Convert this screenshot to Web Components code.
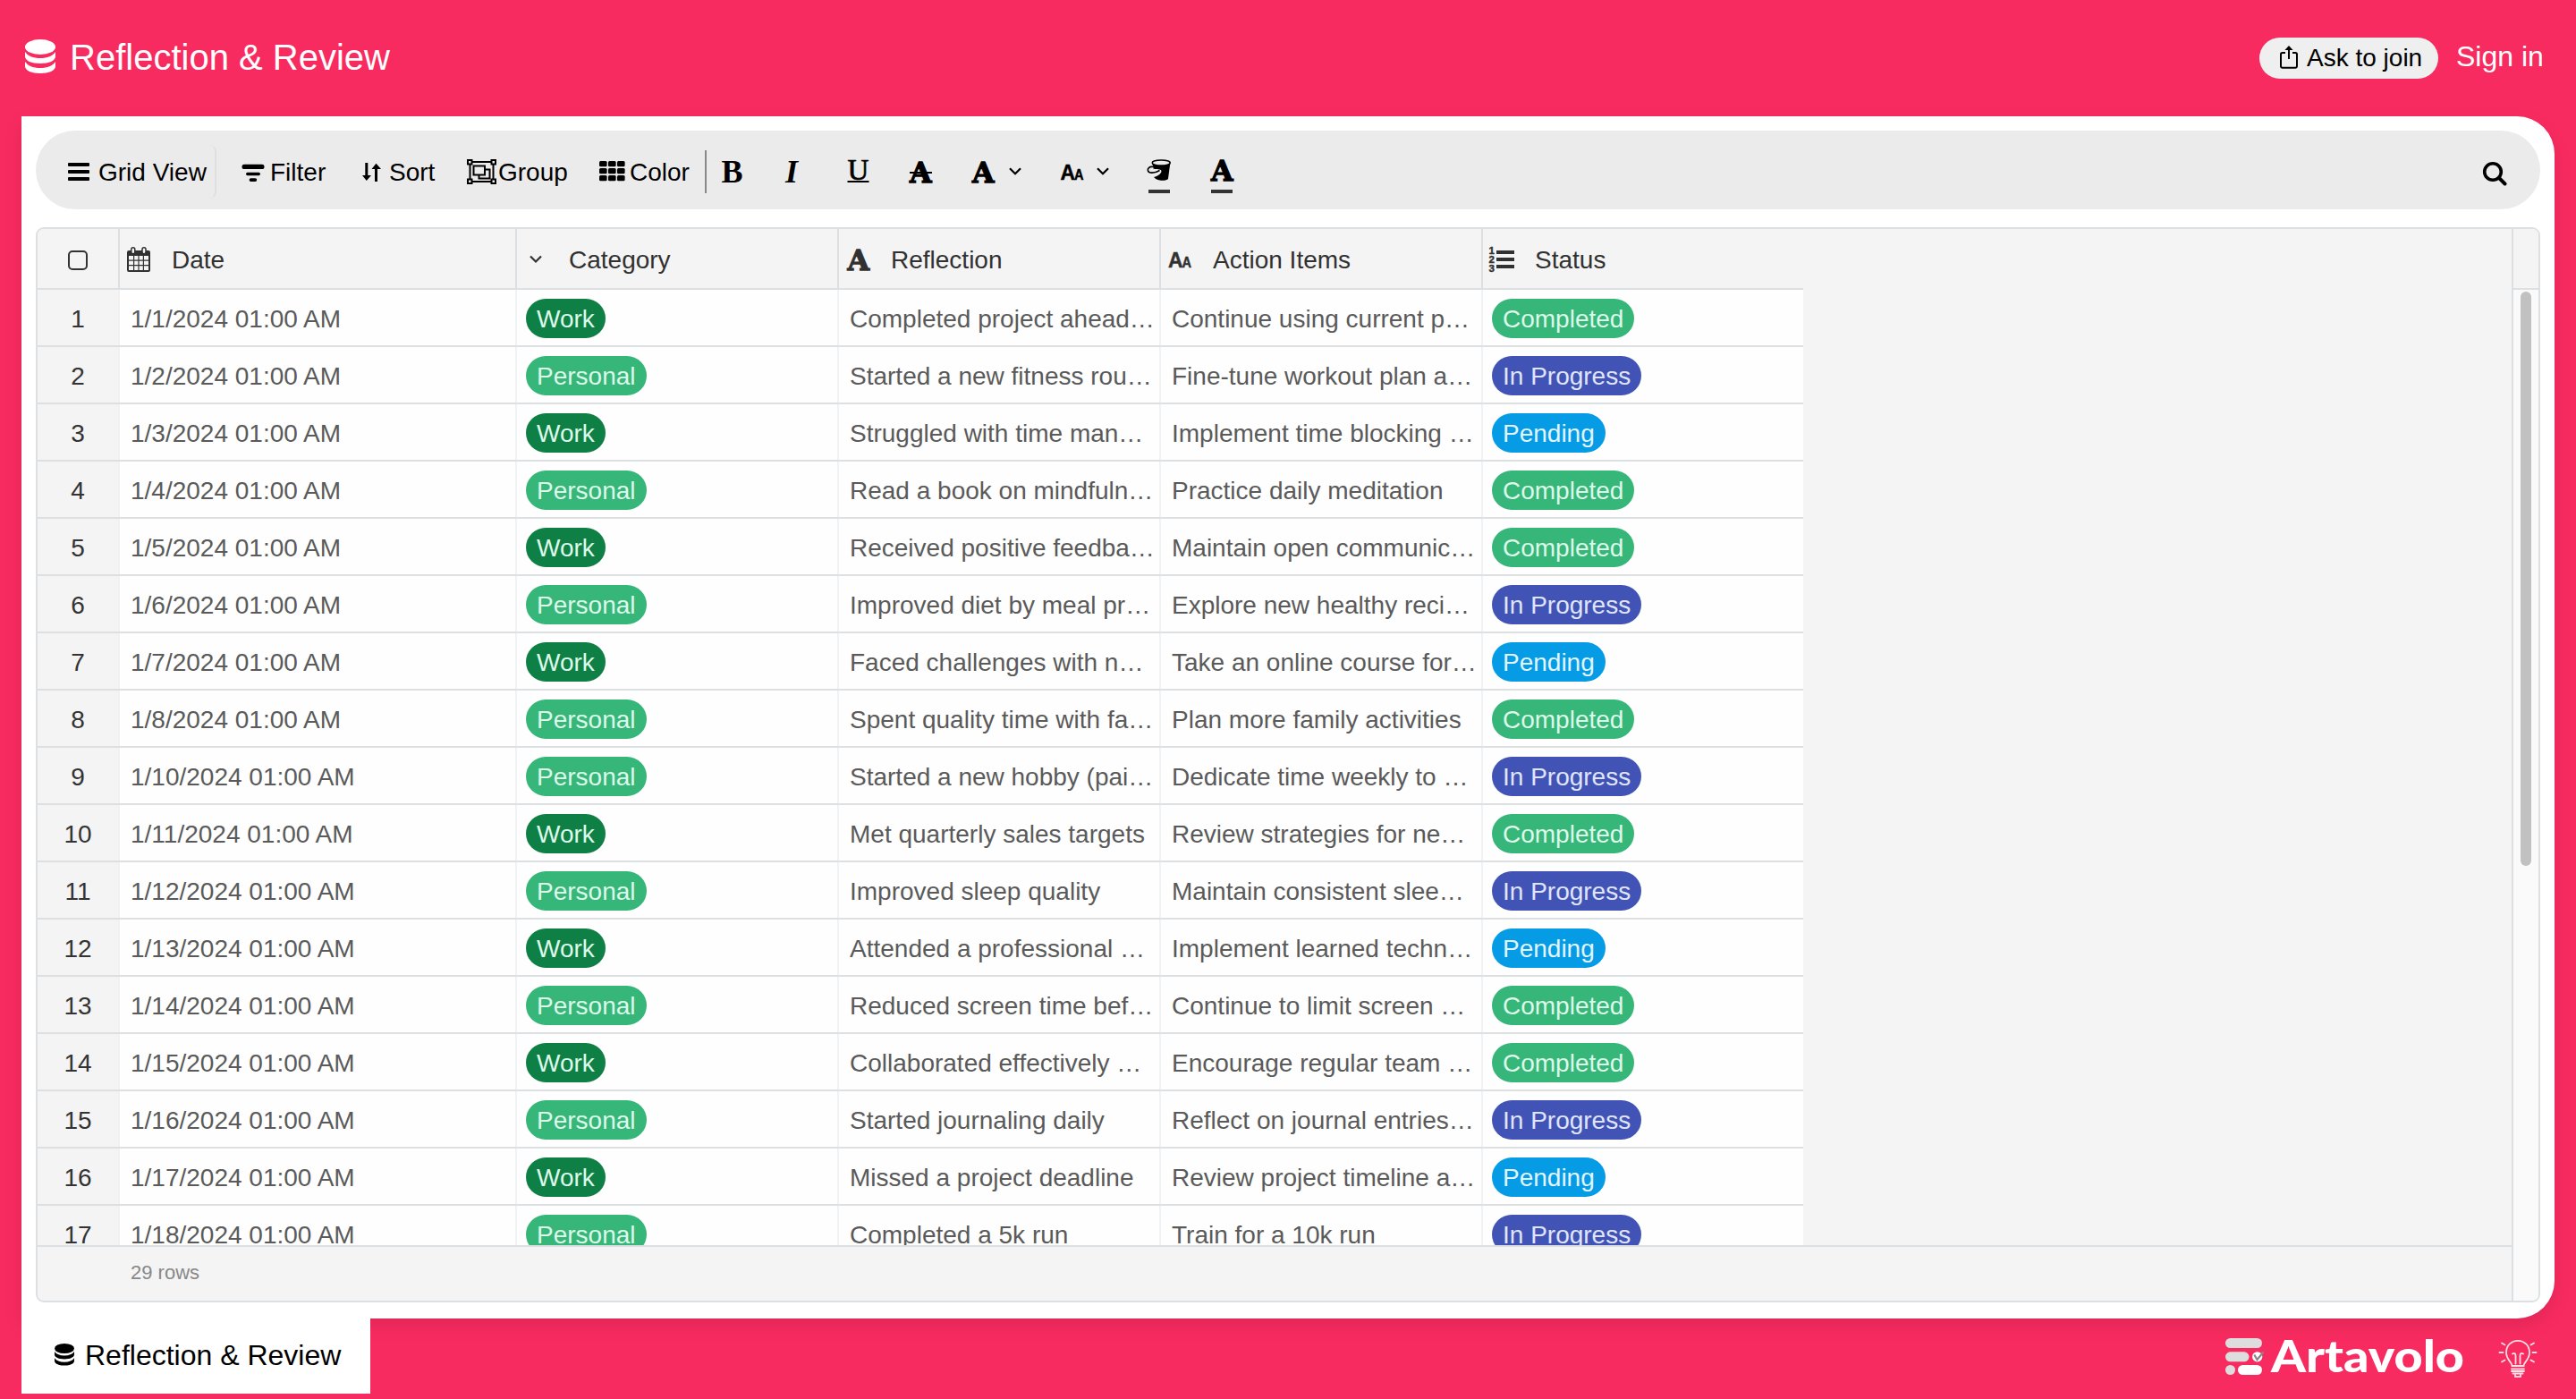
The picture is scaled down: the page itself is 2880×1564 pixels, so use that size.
<!DOCTYPE html>
<html lang="en">
<head>
<meta charset="utf-8">
<title>Reflection &amp; Review</title>
<style>
html, body { margin: 0; height: 100%; }
body {
  background: #f82b60;
  font-family: "Liberation Sans", Arial, sans-serif;
  font-size: 28px;
  overflow: hidden;
}
</style>
</head>
<body>
<base-app></base-app>

<script>
(function () {
    // slab "A" shared by several of the format icons
    const slab = (x, y) => `<text x="${x}" y="${y}" font-family="DejaVu Serif" font-weight="700" font-size="32" stroke="currentColor" stroke-width="1.300" textLength="24.500" lengthAdjust="spacingAndGlyphs">A</text>`;
    const pair = (x, y) => `<g font-family="Liberation Sans" font-weight="700" stroke="currentColor" stroke-width=".500"><text x="${x}" y="${y}" font-size="24" textLength="16.500" lengthAdjust="spacingAndGlyphs">A</text><text x="${x + 15.5}" y="${y}" font-size="16" textLength="10.500" lengthAdjust="spacingAndGlyphs">A</text></g>`;

    // each icon: [width, height, markup]
    const ICONS = {
        db: [34, 38, `<ellipse cx="17" cy="8.5" rx="17" ry="8.5"/><path d="M0 14C3 18.500 9 21 17 21s14-2.500 17-7v5c0 5-7.500 8-17 8S0 24 0 19z"/><path d="M0 25c3 4.500 9 7 17 7s14-2.500 17-7v5c0 5-7.500 8-17 8S0 35 0 30z"/>`],
        share: [20, 26, `<path d="M6 8H2.800A1.800 1.800 0 0 0 1 9.800V23a1.800 1.800 0 0 0 1.800 1.800h14.400A1.800 1.800 0 0 0 19 23V9.800A1.800 1.800 0 0 0 17.200 8H14M10 15V2" fill="none" stroke="currentColor" stroke-width="2"/><path d="M10 0l4.500 5h-9z"/>`],
        menu: [24, 32, `<rect y="6" width="24" height="4" rx="1"/><rect y="14" width="24" height="4" rx="1"/><rect y="22" width="24" height="4" rx="1"/>`],
        filter: [26, 32, `<rect x=".5" y="7.700" width="25" height="5.300" rx="2.600"/><rect x="5" y="16.700" width="16" height="3.500" rx="1.700"/><rect x="8.600" y="23.200" width="8.600" height="3.800" rx="1.900"/>`],
        sort: [24, 32, `<path d="M4.300 6h3v14H11l-5.200 6L1 20h3.300zM15 27V13h-3.500l5-6.200 5.500 6.200h-4v14z"/>`],
        group: [35, 32, `<g fill="none" stroke="currentColor" stroke-width="2"><path d="M6 5h23M6 27h23M4.500 7v18M30.500 7v18"/><rect x="2" y="3" width="4.500" height="4.500"/><rect x="28.500" y="3" width="4.500" height="4.500"/><rect x="2" y="24.500" width="4.500" height="4.500"/><rect x="28.500" y="24.500" width="4.500" height="4.500"/><rect x="8.500" y="9.500" width="12.500" height="10"/><path d="M21 13.500h5.500v10H14.500v-4"/></g>`],
        color: [31, 32, [1, 11, 21].map(x => [4, 12, 20].map(y => `<rect x="${x}" y="${y}" width="8.600" height="6.300" rx="1.500"/>`).join('')).join('')],
        bold: [28, 32, `<text x="2.500" y="28" font-family="Liberation Serif" font-weight="700" font-size="36">B</text>`],
        italic: [28, 32, `<text x="6" y="28" font-family="Liberation Serif" font-weight="700" font-style="italic" font-size="36" textLength="14" lengthAdjust="spacingAndGlyphs">I</text>`],
        underline: [30, 32, `<text x="3.500" y="24.500" font-family="Liberation Serif" stroke="currentColor" stroke-width=".7" font-size="33">U</text><path d="M3.500 26h24v2h-24z"/>`],
        strike: [30, 32, `${slab(3, 27.5)}<path d="M3 16h25v2H3z"/>`],
        font: [30, 32, slab(3, 27.5)],
        size: [30, 32, pair(1.5, 25)],
        chevron: [18, 32, `<path d="M3 12.300l6 6 6-6" fill="none" stroke="currentColor" stroke-width="2.200"/>`],
        fill: [30, 32, `<path d="M7 5l1.500 7.500C10 13.500 15 13 17 14c2 3-3 7-8 8 2 3 8 4.500 13 3.500 1.500-.5 3-1 3-2L27.500 5z"/><ellipse cx="17.200" cy="6" rx="10" ry="3" fill="#ebebeb" stroke="currentColor" stroke-width="1.500"/><path d="M8 10.500c-4-.5-6.500 2-5.500 4.500 1 3 7 3 13-.5" fill="none" stroke="currentColor" stroke-width="1.700"/><path d="M3 36h24v4H3z" fill="#333"/>`],
        textcolor: [30, 32, `${slab(3, 25.5)}<path d="M3 36h24v4H3z" fill="#333"/>`],
        search: [28, 32, `<circle cx="12" cy="17" r="9.300" fill="none" stroke="currentColor" stroke-width="3.600"/><path d="M19 24l6.500 6.500" stroke="currentColor" stroke-width="4" stroke-linecap="round"/>`],
        calendar: [32, 32, `<path d="M4 6h22a2 2 0 0 1 2 2v20a2 2 0 0 1-2 2H4a2 2 0 0 1-2-2V8a2 2 0 0 1 2-2z"/><path d="M4 12h5v4.500H4zM10.200 12h4.200v4.500h-4.200zM15.600 12h4.200v4.500h-4.200zM21 12h5v4.500h-5zM4 17.700h5v4.200H4zM10.200 17.700h4.200v4.200h-4.200zM15.600 17.700h4.200v4.200h-4.200zM21 17.700h5v4.200h-5zM4 23.200h5V28H4zM10.200 23.200h4.200V28h-4.200zM15.600 23.200h4.200V28h-4.200zM21 23.200h5V28h-5z" fill="#f4f4f4"/><rect x="6.800" y="2.800" width="4" height="7" rx="2" fill="#f4f4f4" stroke="currentColor" stroke-width="1.500"/><rect x="19" y="2.800" width="4" height="7" rx="2" fill="#f4f4f4" stroke="currentColor" stroke-width="1.500"/>`],
        select: [32, 32, `<path d="M9 12.500l6 6 6-6" fill="none" stroke="currentColor" stroke-width="2.200"/>`],
        longtext: [32, 32, slab(3.5, 27.5)],
        shorttext: [32, 32, pair(2, 25)],
        list: [32, 32, `<g font-family="Liberation Sans" font-weight="700" font-size="11.500" stroke="currentColor" stroke-width=".400"><text x="0.500" y="10">1</text><text x="0.500" y="20">2</text><text x="0.500" y="30">3</text></g><path d="M9 6h20v4H9zM9 14h20v4H9zM9 22h20v4H9z"/>`],
        logo: [44, 42, `<g fill="#ddd"><rect y="0" width="41" height="11" rx="5.500"/><rect y="15.300" width="26.500" height="11" rx="5.500"/><circle cx="5.500" cy="35.500" r="5.500"/></g><rect x="14" y="30" width="27" height="11" rx="5.500" fill="#fff"/><circle cx="35.700" cy="20.800" r="5.600" fill="#fff"/><path d="M32.300 18.500l3.200 5.500 7-8.500" fill="none" stroke="#888" stroke-width="2.200"/>`],
        bulb: [42, 42, `<g fill="none" stroke="#ffdde6" stroke-width="1.800" stroke-linecap="round"><path d="M14.500 29c0-4-6.500-7-6.500-15C8 6 14 .8 21 .8S34 6 34 14c0 8-6.500 11-6.500 15z"/><path d="M15 15.500c2.500-1.500 3.500 0 3.500 2.500v8.500M27 15.500c-2.500-1.500-3.500 0-3.500 2.500v8.500M14 32.500h14M14 35h14M15.500 37.500h11M18 38v3.200h6V38M.5 14h4M37.500 14h4M3 3.500l3.500 2M39 3.500l-3.500 2M3 24.500l3.500-2M39 24.500l-3.500-2"/></g>`]
    };

    function define(name, html, setup) {
        const tmpl = document.createElement('template');
        tmpl.innerHTML = html;
        customElements.define(name, class extends HTMLElement {
            connectedCallback() {
                if (this.shadowRoot) return;
                const root = this.attachShadow({mode: 'open'});
                root.appendChild(tmpl.content.cloneNode(true));
                if (setup) setup(root, this);
            }
        });
    }

    define('ui-icon', `
<style>
:host { display: block; flex: none; }
svg { display: block; overflow: visible; }
</style>`, (root, el) => {
        const [w, h, body] = ICONS[el.getAttribute('name')];
        const width = el.getAttribute('width') || w;
        const holder = document.createElement('div');
        holder.innerHTML = `<svg width="${width}" height="${h * width / w}" viewBox="0 0 ${w} ${h}" fill="currentColor">${body}</svg>`;
        root.appendChild(holder);
    });

    define('top-bar', `
<style>
:host {
  display: flex;
  align-items: center;
  height: 130px;
  box-sizing: border-box;
  padding: 0 36px 4px 28px;
  color: #fff;
}
h1 { margin: 0 0 0 16px; padding-top: 2px; font-size: 40px; font-weight: 400; line-height: 46px; }
button {
  display: flex;
  align-items: center;
  width: 200px;
  height: 46px;
  margin: 4px 20px 0 auto;
  padding: 0 0 0 23px;
  gap: 10px;
  border: 0;
  border-radius: 23px;
  background: #efefef;
  color: #000;
  font: inherit;
  white-space: nowrap;
}
button ui-icon { margin-bottom: 2px; }
a { font-size: 32px; line-height: 36px; width: 98px; white-space: nowrap; }
</style>
<ui-icon name="db"></ui-icon>
<h1>Reflection &amp; Review</h1>
<button><ui-icon name="share"></ui-icon>Ask to join</button>
<a>Sign in</a>`);

    define('tool-button', `
<style>
:host {
  display: flex;
  align-items: center;
  height: 60px;
  box-sizing: border-box;
  white-space: nowrap;
  flex: none;
}
span { padding-top: 2px; }
</style>
<slot name="icon"></slot>
<span><slot></slot></span>`);

    define('tool-bar', `
<style>
:host {
  display: flex;
  align-items: center;
  height: 88px;
  box-sizing: border-box;
  padding-top: 4px;
  border-radius: 44px;
  background: #ebebeb;
  color: #000;
}
.view { width: 202px; padding-left: 36px; gap: 10px; border-right: 2px solid #dfdfdf; border-radius: 8px; }
.filter { width: 142px; padding-left: 28px; gap: 6px; }
.sort { width: 126px; padding-left: 20px; gap: 7px; }
.group { width: 140px; padding-left: 11px; gap: 1px; }
.color { width: 138px; padding-left: 19px; gap: 4px; }
.divider { width: 2px; height: 48px; background: #888; margin-right: 14px; }
.format { display: flex; gap: 40px; }
.search { margin: 0 37px 2px auto; }
</style>
<tool-button class="view"><ui-icon slot="icon" name="menu"></ui-icon>Grid View</tool-button>
<tool-button class="filter"><ui-icon slot="icon" name="filter"></ui-icon>Filter</tool-button>
<tool-button class="sort"><ui-icon slot="icon" name="sort"></ui-icon>Sort</tool-button>
<tool-button class="group"><ui-icon slot="icon" name="group"></ui-icon>Group</tool-button>
<tool-button class="color"><ui-icon slot="icon" name="color"></ui-icon>Color</tool-button>
<div class="divider"></div>
<div class="format">
  <ui-icon name="bold"></ui-icon>
  <ui-icon name="italic"></ui-icon>
  <ui-icon name="underline" style="margin-left:4px"></ui-icon>
  <ui-icon name="strike"></ui-icon>
  <ui-icon name="font"></ui-icon>
  <ui-icon name="chevron" style="margin-left:-28px"></ui-icon>
  <ui-icon name="size"></ui-icon>
  <ui-icon name="chevron" style="margin-left:-30px"></ui-icon>
  <ui-icon name="fill" style="margin-left:-1px"></ui-icon>
  <ui-icon name="textcolor"></ui-icon>
</div>
<ui-icon class="search" name="search"></ui-icon>`);

    define('tag-pill', `
<style>
:host {
  display: block;
  height: 44px;
  line-height: 46px;
  padding: 0 12px;
  border-radius: 22px;
  background: #37b679;
  color: #dcf9ea;
}
:host([tone="Work"]) { background: #0f8045; color: #dcf9ea; }
:host([tone="In Progress"]) { background: #4154b5; color: #e0e4fa; }
:host([tone="Pending"]) { background: #069be5; color: #e0f5ff; }
</style>
<slot></slot>`);

    const COLUMNS = [
        ['calendar', 'Date'],
        ['select', 'Category'],
        ['longtext', 'Reflection'],
        ['shorttext', 'Action Items'],
        ['list', 'Status']
    ];

    const ROWS = [
        ['1/1', 'Work', 'Completed project ahead…', 'Continue using current p…', 'Completed'],
        ['1/2', 'Personal', 'Started a new fitness rou…', 'Fine-tune workout plan a…', 'In Progress'],
        ['1/3', 'Work', 'Struggled with time man…', 'Implement time blocking …', 'Pending'],
        ['1/4', 'Personal', 'Read a book on mindfuln…', 'Practice daily meditation', 'Completed'],
        ['1/5', 'Work', 'Received positive feedba…', 'Maintain open communic…', 'Completed'],
        ['1/6', 'Personal', 'Improved diet by meal pr…', 'Explore new healthy reci…', 'In Progress'],
        ['1/7', 'Work', 'Faced challenges with n…', 'Take an online course for…', 'Pending'],
        ['1/8', 'Personal', 'Spent quality time with fa…', 'Plan more family activities', 'Completed'],
        ['1/10', 'Personal', 'Started a new hobby (pai…', 'Dedicate time weekly to …', 'In Progress'],
        ['1/11', 'Work', 'Met quarterly sales targets', 'Review strategies for ne…', 'Completed'],
        ['1/12', 'Personal', 'Improved sleep quality', 'Maintain consistent slee…', 'In Progress'],
        ['1/13', 'Work', 'Attended a professional …', 'Implement learned techn…', 'Pending'],
        ['1/14', 'Personal', 'Reduced screen time bef…', 'Continue to limit screen …', 'Completed'],
        ['1/15', 'Work', 'Collaborated effectively …', 'Encourage regular team …', 'Completed'],
        ['1/16', 'Personal', 'Started journaling daily', 'Reflect on journal entries…', 'In Progress'],
        ['1/17', 'Work', 'Missed a project deadline', 'Review project timeline a…', 'Pending'],
        ['1/18', 'Personal', 'Completed a 5k run', 'Train for a 10k run', 'In Progress']
    ];

    define('data-grid', `
<style>
:host {
  display: flex;
  height: 1202px;
  box-sizing: border-box;
  border: 2px solid #dce0e3;
  border-radius: 9px;
  overflow: hidden;
  background: #f4f4f4;
  --line: #dce0e3;
}
.main { flex: 1; display: flex; flex-direction: column; min-width: 0; }
.row {
  display: grid;
  grid-template-columns: 92px 444px 360px 360px 360px 358px;
  width: 1974px;
  height: 64px;
  flex: none;
  box-shadow: inset 0 -2px var(--line);
  color: #5a5a5a;
}
.row > div {
  display: flex;
  align-items: center;
  padding-left: 12px;
  margin-bottom: 2px;
  padding-top: 4px;
  background: #fefefe;
  border-right: 2px solid #f1f2f3;
  white-space: nowrap;
  box-sizing: border-box;
}
.row > div.tag { padding-left: 10px; padding-top: 2px; }
.row > div:first-child { justify-content: center; padding-left: 0; background: #f4f4f4; border-color: #f1f1f2; color: #333; }
.row > div:last-child { border-right: 0; }
.head { height: 68px; color: #313131; }
.head > div, .row.head > div:first-child { background: #f4f4f4; border-color: var(--line); }
.row.head > div { background: #f4f4f4; padding-left: 6px; padding-top: 2px; gap: 20px; }
.row.head > div:first-child { padding-left: 0; }
.label { padding-top: 2px; }
.check { width: 18px; height: 18px; border: 2px solid #333; border-radius: 5px; margin-top: 2px; }
.rows { flex: 1; overflow: hidden; min-height: 0; }
footer {
  height: 62px;
  flex: none;
  box-sizing: border-box;
  border-top: 2px solid var(--line);
  padding-left: 104px;
  line-height: 58px;
  font-size: 22px;
  color: #888;
}
.scroll { width: 30px; box-sizing: border-box; border-left: 2px solid var(--line); background: #fafafa; }
.scroll .cap { height: 68px; box-sizing: border-box; border-bottom: 2px solid var(--line); background: #f4f4f4; }
.scroll .thumb { width: 12px; height: 642px; margin: 2px 0 0 8px; border-radius: 6px; background: #c1c1c1; }
</style>
<div class="main">
  <div class="row head"><div><span class="check"></span></div></div>
  <div class="rows"></div>
  <footer>29 rows</footer>
</div>
<div class="scroll"><div class="cap"></div><div class="thumb"></div></div>`, root => {
        root.querySelector('.head').insertAdjacentHTML('beforeend',
            COLUMNS.map(([icon, label]) => `<div><ui-icon name="${icon}"></ui-icon><span class="label">${label}</span></div>`).join(''));
        root.querySelector('.rows').innerHTML = ROWS.map(([date, category, reflection, action, status], i) => `
<div class="row">
  <div>${i + 1}</div>
  <div>${date}/2024 01:00 AM</div>
  <div class="tag"><tag-pill tone="${category}">${category}</tag-pill></div>
  <div>${reflection}</div>
  <div>${action}</div>
  <div class="tag"><tag-pill tone="${status}">${status}</tag-pill></div>
</div>`).join('');
    });

    define('bottom-bar', `
<style>
:host { display: flex; align-items: flex-start; height: 90px; padding: 0 44px 0 24px; position: relative; }
.tab {
  display: flex;
  align-items: center;
  width: 390px;
  height: 84px;
  box-sizing: border-box;
  padding: 0 0 3px 37px;
  background: #fff;
  color: #000;
  font-size: 32px;
  white-space: nowrap;
}
.tab ui-icon { margin-right: 12px; }
.tab span { padding-top: 2px; }
.brand { display: flex; align-items: flex-start; margin-left: auto; padding-top: 22px; }
.word { display: block; margin: 0 38px 0 7px; overflow: visible; }
.bulb { margin-top: 2px; }
</style>
<div class="tab"><ui-icon name="db" width="22"></ui-icon><span>Reflection &amp; Review</span></div>
<div class="brand">
  <ui-icon name="logo"></ui-icon>
  <svg class="word" width="217" height="42" viewBox="0 0 217 42"><text x="0" y="38" fill="#fff" font-family="Lato" font-weight="900" font-size="50" textLength="216" lengthAdjust="spacingAndGlyphs">Artavolo</text></svg>
  <ui-icon class="bulb" name="bulb"></ui-icon>
</div>`);

    define('base-app', `
<style>
:host { display: flex; flex-direction: column; height: 1564px; }
main {
  height: 1344px;
  margin: 0 24px;
  padding: 16px 16px 0;
  box-sizing: border-box;
  background: #fff;
  border-radius: 0 42px 42px 0;
  box-shadow: 0 8px 20px rgba(0, 0, 0, .1);
}
data-grid { margin-top: 20px; }
</style>
<top-bar></top-bar>
<main>
  <tool-bar></tool-bar>
  <data-grid></data-grid>
</main>
<bottom-bar></bottom-bar>`);
})();
</script>
</body>
</html>
